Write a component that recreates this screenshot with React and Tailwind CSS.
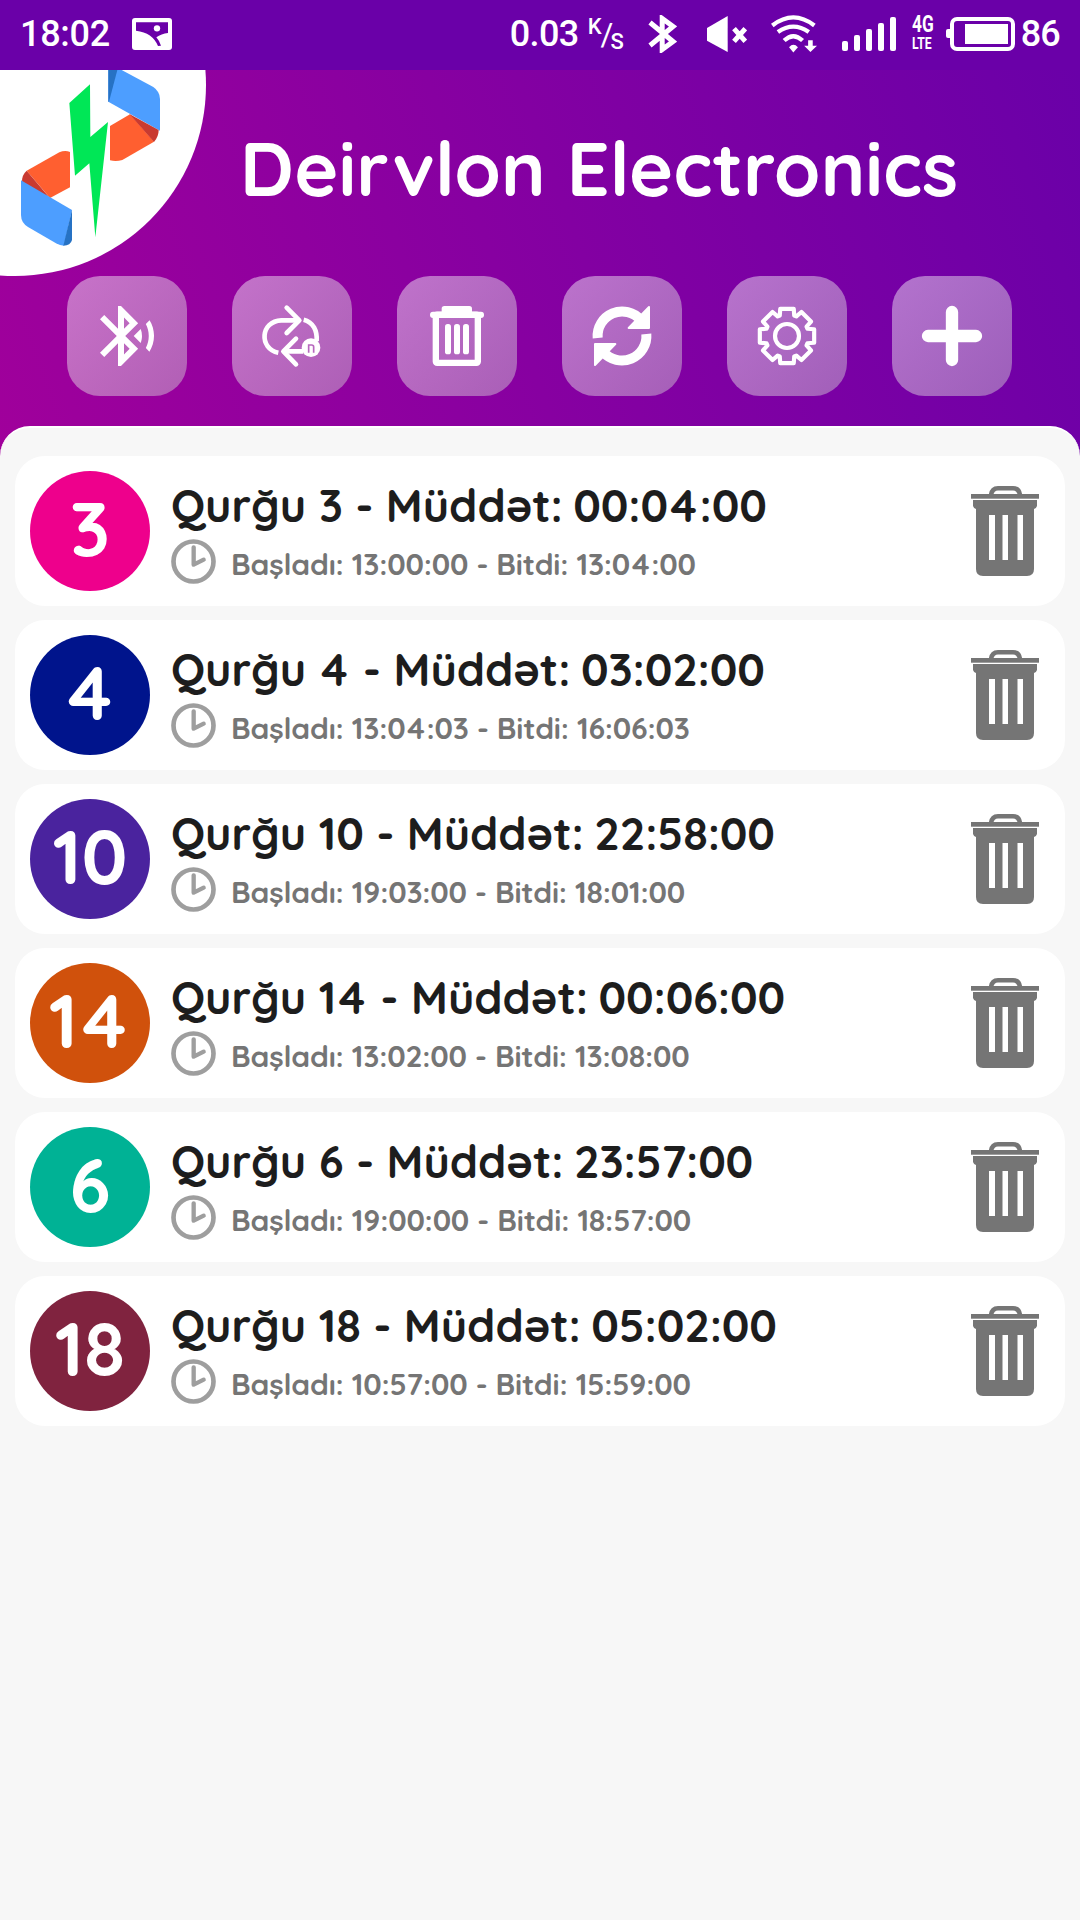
const devices = [
  { id: 3, color: 'bg-[#ee008c]', duration: '00:04:00', start: '13:00:00', end: '13:04:00' },
  { id: 4, color: 'bg-[#00148c]', duration: '03:02:00', start: '13:04:03', end: '16:06:03' },
  { id: 10, color: 'bg-[#4a239e]', duration: '22:58:00', start: '19:03:00', end: '18:01:00' },
  { id: 14, color: 'bg-[#d0510c]', duration: '00:06:00', start: '13:02:00', end: '13:08:00' },
  { id: 6, color: 'bg-[#00b295]', duration: '23:57:00', start: '19:00:00', end: '18:57:00' },
  { id: 18, color: 'bg-[#80233f]', duration: '05:02:00', start: '10:57:00', end: '15:59:00' },
];

// Gives the digit 4 the side bearings of a tabular figure.
function Digits({ value }) {
  return String(value)
    .split(/(4)/)
    .map((part, i) => (part === '4' ? <span key={i} className="mx-[0.06em]">4</span> : part));
}

function StatusBar() {
  return (
    <div className="flex h-[70px] items-center bg-[#6a00a8] pr-5 pb-[3px] pl-5 font-['Roboto',sans-serif] text-[36px] leading-none font-medium text-white">
      <span className="w-[112px] tracking-[-0.3px]">18:02</span>
      <svg className="h-8 w-10" viewBox="0 0 120 96">
        <rect width="120" height="96" rx="9" fill="white" />
        <path d="M12 13 H108 V45 Q88 47 73 58 Q82 68 87 83 L78 84 Q62 44 12 38 Z" fill="#6a00a8" />
        <circle cx="75" cy="31" r="9.500" fill="white" />
      </svg>
      <span className="ml-auto tracking-[-0.6px]">0.03</span>
      <span className="ml-[9px] flex h-9 w-9 items-start text-[22px] leading-none">
        <span>K</span>
        <span className="-ml-px pt-[3px] text-[31px] leading-none font-normal">/</span>
        <span className="-ml-[3px] pt-[15px]">S</span>
      </span>
      <svg className="ml-6 h-[38px] w-[29px]" viewBox="0 0 29 38" fill="none" stroke="white" strokeWidth="5">
        <path d="M2 7.500 L25 26.500 L14.200 34.500 V3.500 L25 11.500 L2 30.500" />
      </svg>
      <svg className="ml-[30px] h-9 w-10" viewBox="0 0 120 108" fill="white">
        <path d="M0 36 L62 0 V108 L0 74 Z" />
        <path d="M81 38 L115 76 M115 38 L81 76" stroke="white" strokeWidth="15" />
      </svg>
      <svg className="ml-6 h-[38px] w-[46px]" viewBox="0 0 140 114" fill="none" stroke="white" strokeWidth="13">
        <path d="M4 31 Q68 -18 132 31 M21 51 Q68 18 115 51 M40 77 Q68 50 96 77" />
        <path d="M55 97 Q68 83 82 97 L68 113 Z" fill="white" stroke="none" />
        <path d="M113 76 H127 V93 H140 L120 112 L101 93 H113 Z" fill="white" stroke="none" />
      </svg>
      <svg className="ml-[25px] h-[34px] w-[54px]" viewBox="0 0 162 102" fill="white">
        <rect y="72" width="18" height="30" rx="6" />
        <rect x="36" y="54" width="18" height="48" rx="6" />
        <rect x="72" y="36" width="18" height="66" rx="6" />
        <rect x="108" y="18" width="18" height="84" rx="6" />
        <rect x="144" width="18" height="102" rx="6" />
      </svg>
      <span className="ml-4 flex w-[22px] flex-col font-bold">
        <span className="w-max origin-left scale-x-[0.72] text-[24px] leading-[20px]">4G</span>
        <span className="w-max origin-left scale-x-[0.72] text-[17px] leading-[19px]">LTE</span>
      </span>
      <svg className="ml-3 h-[34px] w-[69px]" viewBox="0 0 69 34">
        <rect y="12" width="6" height="9" rx="2" fill="white" />
        <rect x="6" y="2" width="61" height="30" rx="5" fill="none" stroke="white" strokeWidth="4" />
        <rect x="19" y="7" width="43" height="20" fill="white" />
      </svg>
      <span className="ml-1.5 tracking-[-0.8px]">86</span>
    </div>
  );
}

function Logo() {
  return (
    <svg className="h-[206px] w-[210px] shrink-0" viewBox="0 210 630 618">
      <circle cx="45" cy="255" r="573" fill="white" />
      <path d="M325 210 H365 L460 261 Q480 275 480 297 V392 L325 305 Z" fill="#4d9eff" />
      <path d="M325 210 H352 L327 305 H325 Z" fill="#2672c4" />
      <path d="M390 343 L330 378 V481 Q348 486 367 480 L462 425 Z" fill="#ff5f30" />
      <path d="M388 342 L476 390 Q476 410 462 426 Z" fill="#c93a30" />
      <path d="M270 253 L208 309 L225 527 L268 490 L286 712 L324 366 L271 411 Z" fill="#00e756" />
      <path d="M210 456 Q195 450 178 457 L80 512 L150 594 L210 562 Z" fill="#ff5f30" />
      <path d="M80 512 Q65 525 66 547 L150 595 Z" fill="#c93a30" />
      <path d="M63 541 L216 630 L192 737 Q180 737 168 730 L84 681 Q63 668 63 645 Z" fill="#4d9eff" />
      <path d="M216 630 V720 Q212 737 190 737 Z" fill="#2672c4" />
    </svg>
  );
}

const gearPoints = Array.from({ length: 8 }, (_, k) =>
  [[-19.5, 65], [-14, 84], [14, 84], [19.5, 65]].map(([offset, radius]) => {
    const a = ((k * 45 + offset) * Math.PI) / 180;
    return `${(180 + radius * Math.sin(a)).toFixed(1)},${(180 - radius * Math.cos(a)).toFixed(1)}`;
  }).join(' ')
).join(' ');

const actions = [
  {
    label: 'Bluetooth',
    icon: (
      <g transform="translate(72 72) scale(9)" fill="white">
        <path d="M14.240 12.010l2.320 2.320c.28-.72.44-1.510.44-2.330 0-.82-.16-1.590-.43-2.310l-2.330 2.320zm5.290-5.300l-1.260 1.260c.63 1.210.98 2.570.98 4.020s-.36 2.820-.98 4.020l1.200 1.200c.97-1.540 1.540-3.360 1.540-5.310-.01-1.890-.55-3.670-1.480-5.190zm-3.820 1L10 2H9v7.590L4.410 5 3 6.410 8.590 12 3 17.590 4.410 19 9 14.410V22h1l5.710-5.710-4.300-4.290 4.300-4.290zM11 5.830l1.880 1.880L11 9.590V5.830zm1.880 10.460L11 18.170v-3.760l1.880 1.880z" />
      </g>
    ),
  },
  {
    label: 'Repeat',
    icon: (
      <g fill="none" stroke="white" strokeWidth="14">
        <path d="M200 133 H148 C85 135 80 218 139 230 M215 131 C244 138 256 165 254 195 M154 226 H214" />
        <path d="M164 95 L202 133 L164 171 M192 188 L154 226 L192 265" strokeLinecap="round" strokeLinejoin="round" />
        <circle cx="237" cy="215" r="28" fill="white" stroke="none" />
        <path d="M230 230 V207 H239 Q245 207 245 213 V230" stroke="#b768be" strokeWidth="5" />
      </g>
    ),
  },
  {
    label: 'Delete all',
    icon: (
      <g fill="white">
        <rect x="134" y="90" width="91" height="28" rx="8" />
        <rect x="99" y="107" width="162" height="19" rx="9" />
        <rect x="116.500" y="116" width="126" height="144.500" rx="4" fill="none" stroke="white" strokeWidth="19" />
        <rect x="144" y="144" width="18" height="91" rx="8" />
        <rect x="171" y="144" width="18" height="91" rx="8" />
        <rect x="198" y="144" width="18" height="91" rx="8" />
      </g>
    ),
  },
  {
    label: 'Refresh',
    icon: (
      <g fill="white" stroke="white" strokeLinejoin="round">
        <path d="M107 186 A73.500 73.500 0 0 1 236 132 M253 174 A73.500 73.500 0 0 1 124 228" fill="none" strokeWidth="30" />
        <path d="M261 93 V156 H200 Z M99 267 V204 H160 Z" strokeWidth="6" />
      </g>
    ),
  },
  {
    label: 'Settings',
    icon: (
      <g fill="none" stroke="white" strokeWidth="12.500" strokeLinejoin="round">
        <polygon points={gearPoints} />
        <circle cx="180" cy="180" r="36" />
      </g>
    ),
  },
  {
    label: 'Add',
    icon: <path d="M180 108 V252 M108 180 H252" stroke="white" strokeWidth="37" strokeLinecap="round" />,
  },
];

function ActionButton({ label, icon }) {
  return (
    <button
      aria-label={label}
      className="size-[120px] rounded-[33px] bg-linear-to-br from-white/45 to-[#d2d2d2]/45"
    >
      <svg className="size-[120px]" viewBox="0 0 360 360">{icon}</svg>
    </button>
  );
}

function ClockIcon() {
  return (
    <svg className="size-[45px]" viewBox="0 0 135 135" fill="none" stroke="#9e9e9e">
      <circle cx="67.500" cy="67.500" r="60" strokeWidth="14" />
      <path d="M68 25 V77 L98 62" strokeWidth="13" strokeLinecap="round" strokeLinejoin="round" />
    </svg>
  );
}

function TrashIcon() {
  return (
    <svg className="h-[90px] w-[68px]" viewBox="0 0 68 90" fill="#757575">
      <path d="M20 9 Q21 2.300 27 2.300 H42 Q48 2.300 49 9" fill="none" stroke="#757575" strokeWidth="4.600" />
      <rect y="8" width="68" height="4.700" />
      <path d="M2 14 H66 V20 Q65 23 63 23 V83 Q63 90 56 90 H12 Q5 90 5 83 V23 Q3 23 2 20 Z" />
      <path d="M18 29 h6 v45 h-6 Z M31.500 29 h5.500 v45 h-5.500 Z M46.500 29 h5.500 v45 h-5.500 Z" fill="white" />
    </svg>
  );
}

function DeviceCard({ device }) {
  return (
    <li className="flex h-[150px] items-center rounded-[30px] bg-white pr-[26px] pl-[15px]">
      <div className={`flex size-[120px] shrink-0 items-center justify-center rounded-full pb-1.5 text-[75px] leading-none text-white ${device.color}`}>
        <Digits value={device.id} />
      </div>
      <div className="ml-[21px] flex h-[108px] flex-1 flex-col whitespace-nowrap">
        <h2 className="text-[45px] leading-[56px] text-[#1d1d1d]">
          Qurğu <Digits value={device.id} /> - Müddət:
          <span className="-ml-[2px] tracking-[-0.15px]"> <Digits value={device.duration} /></span>
        </h2>
        <div className="mt-1.5 flex items-center gap-[15px]">
          <ClockIcon />
          <p className="pt-1 text-[30px] leading-[38px] tracking-[-0.18px] text-[#757575]">
            Başladı: <Digits value={device.start} /> - Bitdi: <Digits value={device.end} />
          </p>
        </div>
      </div>
      <TrashIcon />
    </li>
  );
}

export default function App() {
  return (
    <div className="flex h-[1920px] w-[1080px] flex-col bg-[#f7f7f7] font-['Quicksand','Lato',sans-serif] font-bold">
      <StatusBar />
      <div className="flex flex-1 flex-col bg-[linear-gradient(70deg,#a0009b,#6a00a8)] bg-[length:1080px_386px] bg-no-repeat">
        <header className="h-[356px]">
          <div className="flex">
            <Logo />
            <h1 className="ml-[30px] pt-[51px] text-[75px] leading-[94px] whitespace-nowrap text-white">Deirvlon Electronics</h1>
          </div>
          <nav className="flex gap-[45px] pl-[67px]">
            {actions.map((action) => (
              <ActionButton key={action.label} {...action} />
            ))}
          </nav>
        </header>
        <main className="flex-1 rounded-t-[30px] border-t-2 border-white bg-[#f7f7f7] px-[15px] pt-7">
          <ul className="flex flex-col gap-[14px]">
            {devices.map((device) => (
              <DeviceCard key={device.id} device={device} />
            ))}
          </ul>
        </main>
      </div>
    </div>
  );
}
